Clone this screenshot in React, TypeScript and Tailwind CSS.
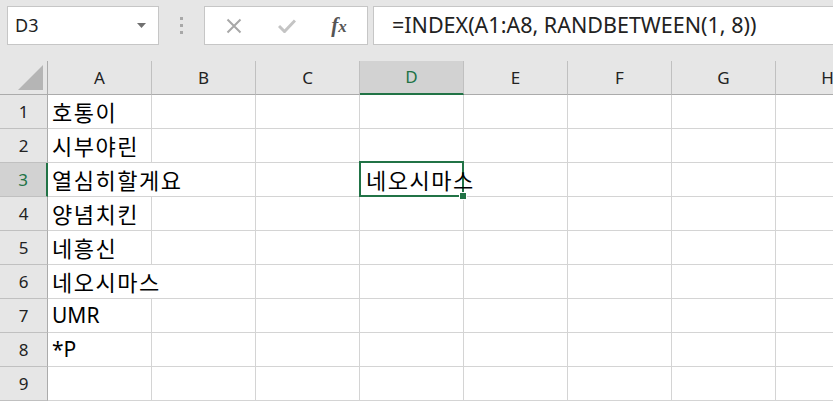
import React from 'react';

const COLS = ['A', 'B', 'C', 'D', 'E', 'F', 'G', 'H'];

const DATA: Record<number, string> = {
  1: '호통이',
  2: '시부야린',
  3: '열심히할게요',
  4: '양념치킨',
  5: '네흥신',
  6: '네오시마스',
  7: 'UMR',
  8: '*P',
};

// cells whose text spills over into the next column (gridline hidden)
const SPILL = new Set(['A3', 'A6']);

const FONT = { fontFamily: '"Noto Sans", "Noto Sans CJK KR", sans-serif' };

const isHangul = (s: string) => /[\uac00-\ud7a3]/.test(s);

function FormulaBar() {
  return (
    <div className="flex h-[61px] items-start bg-[#e6e6e6] pt-[6px]">
      {/* Name box */}
      <div className="ml-[7px] flex h-[39px] w-[152px] items-center justify-between border border-[#c6c6c6] bg-white pl-[7px] pr-[12px]">
        <span className="text-[18px] text-[#222]">D3</span>
        <svg width="9" height="5" viewBox="0 0 9 5">
          <polygon points="0,0 9,0 4.5,5" fill="#707070" />
        </svg>
      </div>

      {/* Grip dots */}
      <div className="flex w-[45px] justify-center pt-[11px]">
        <div className="flex flex-col gap-[4px]">
          <span className="block h-[3px] w-[3px] bg-[#a8a8a8]" />
          <span className="block h-[3px] w-[3px] bg-[#a8a8a8]" />
          <span className="block h-[3px] w-[3px] bg-[#a8a8a8]" />
        </div>
      </div>

      {/* Cancel / enter / fx */}
      <div className="flex h-[39px] w-[164px] items-center border border-[#c6c6c6] bg-white">
        <div className="flex w-[56px] justify-center pl-[1px]">
          <svg width="16" height="16" viewBox="0 0 16 16">
            <path d="M1.5 1.5 L14.5 14.5 M14.5 1.5 L1.5 14.5" stroke="#a8a8a8" strokeWidth="2" fill="none" />
          </svg>
        </div>
        <div className="flex w-[52px] justify-center">
          <svg width="18" height="14" viewBox="0 0 18 14">
            <path d="M1 7 L6.5 12.5 L17 1.5" stroke="#c4c4c4" strokeWidth="3" fill="none" />
          </svg>
        </div>
        <div className="flex w-[52px] justify-center">
          <span
            className="text-[21px] font-bold italic text-[#555]"
            style={{ fontFamily: '"Liberation Serif", serif' }}
          >
            f<span className="text-[17px]">x</span>
          </span>
        </div>
      </div>

      {/* Formula input */}
      <div className="ml-[5px] flex h-[39px] flex-1 items-center border-y border-l border-[#c6c6c6] bg-white pl-[18px]">
        <span className="whitespace-nowrap text-[21.5px] text-[#222]" style={FONT}>
          =INDEX(A1:A8, RANDBETWEEN(1, 8))
        </span>
      </div>
    </div>
  );
}

function HeaderRow() {
  return (
    <div className="flex h-[34px]">
      <div className="flex h-[34px] w-[48px] shrink-0 items-end justify-end border-r border-b border-[#ababab] bg-[#e6e6e6] pr-[4px] pb-[4px]">
        <svg width="25" height="25" viewBox="0 0 25 25">
          <polygon points="0,25 25,0 25,25" fill="#b5b5b5" />
        </svg>
      </div>
      {COLS.map((c) => {
        const sel = c === 'D';
        return (
          <div
            key={c}
            className={
              sel
                ? 'flex h-[34px] w-[104px] shrink-0 items-center justify-center border-r border-b-2 border-r-[#c0c0c0] border-b-[#217346] bg-[#d2d2d2] text-[17px] text-[#217346]'
                : 'flex h-[34px] w-[104px] shrink-0 items-center justify-center border-r border-b border-r-[#c0c0c0] border-b-[#ababab] bg-[#e6e6e6] text-[17px] text-[#222]'
            }
          >
            {c}
          </div>
        );
      })}
    </div>
  );
}

function Row({ n }: { n: number }) {
  const sel = n === 3;
  return (
    <div className="flex h-[34px]">
      <div
        className={
          sel
            ? 'flex h-[34px] w-[48px] shrink-0 items-center justify-center border-r-2 border-b border-r-[#217346] border-b-[#c0c0c0] bg-[#d2d2d2] text-[17px] text-[#217346]'
            : 'flex h-[34px] w-[48px] shrink-0 items-center justify-center border-r border-b border-r-[#ababab] border-b-[#c0c0c0] bg-[#e6e6e6] text-[17px] text-[#222]'
        }
      >
        {n}
      </div>
      {COLS.map((c) => {
        const id = c + n;
        let text = '';
        if (c === 'A') text = DATA[n] ?? '';
        if (id === 'D3') text = '네오시마스';
        const spill = SPILL.has(id);
        return (
          <div
            key={c}
            className={
              spill
                ? 'relative flex h-[34px] w-[104px] shrink-0 items-center border-b border-[#d4d4d4] bg-white pr-[1px] pl-[4px]'
                : 'relative flex h-[34px] w-[104px] shrink-0 items-center border-r border-b border-[#d4d4d4] bg-white pl-[4px]'
            }
          >
            {id === 'D3' && (
              <>
                <div className="absolute top-[-2px] right-[-1px] bottom-[-1px] left-[-1px] border-2 border-[#217346]" />
                <div className="absolute right-[-4px] bottom-[-4px] z-20 box-content h-[6px] w-[6px] border border-white bg-[#217346]" />
              </>
            )}
            {text &&
              (isHangul(text) ? (
                <span className={id === 'D3' ? 'relative z-10 ml-[2px] whitespace-nowrap pt-[1px] text-[22px] tracking-[1.5px] text-black' : 'relative z-10 whitespace-nowrap pt-[1px] text-[22px] tracking-[1.5px] text-black'}>
                  {text}
                </span>
              ) : (
                <span className="relative z-10 whitespace-nowrap pt-[1px] text-[21px] text-black">{text}</span>
              ))}
          </div>
        );
      })}
    </div>
  );
}

export default function App() {
  return (
    <div className="h-[403px] w-[833px] overflow-hidden bg-white" style={FONT}>
      <FormulaBar />
      <HeaderRow />
      {[1, 2, 3, 4, 5, 6, 7, 8, 9].map((n) => (
        <Row key={n} n={n} />
      ))}
    </div>
  );
}
